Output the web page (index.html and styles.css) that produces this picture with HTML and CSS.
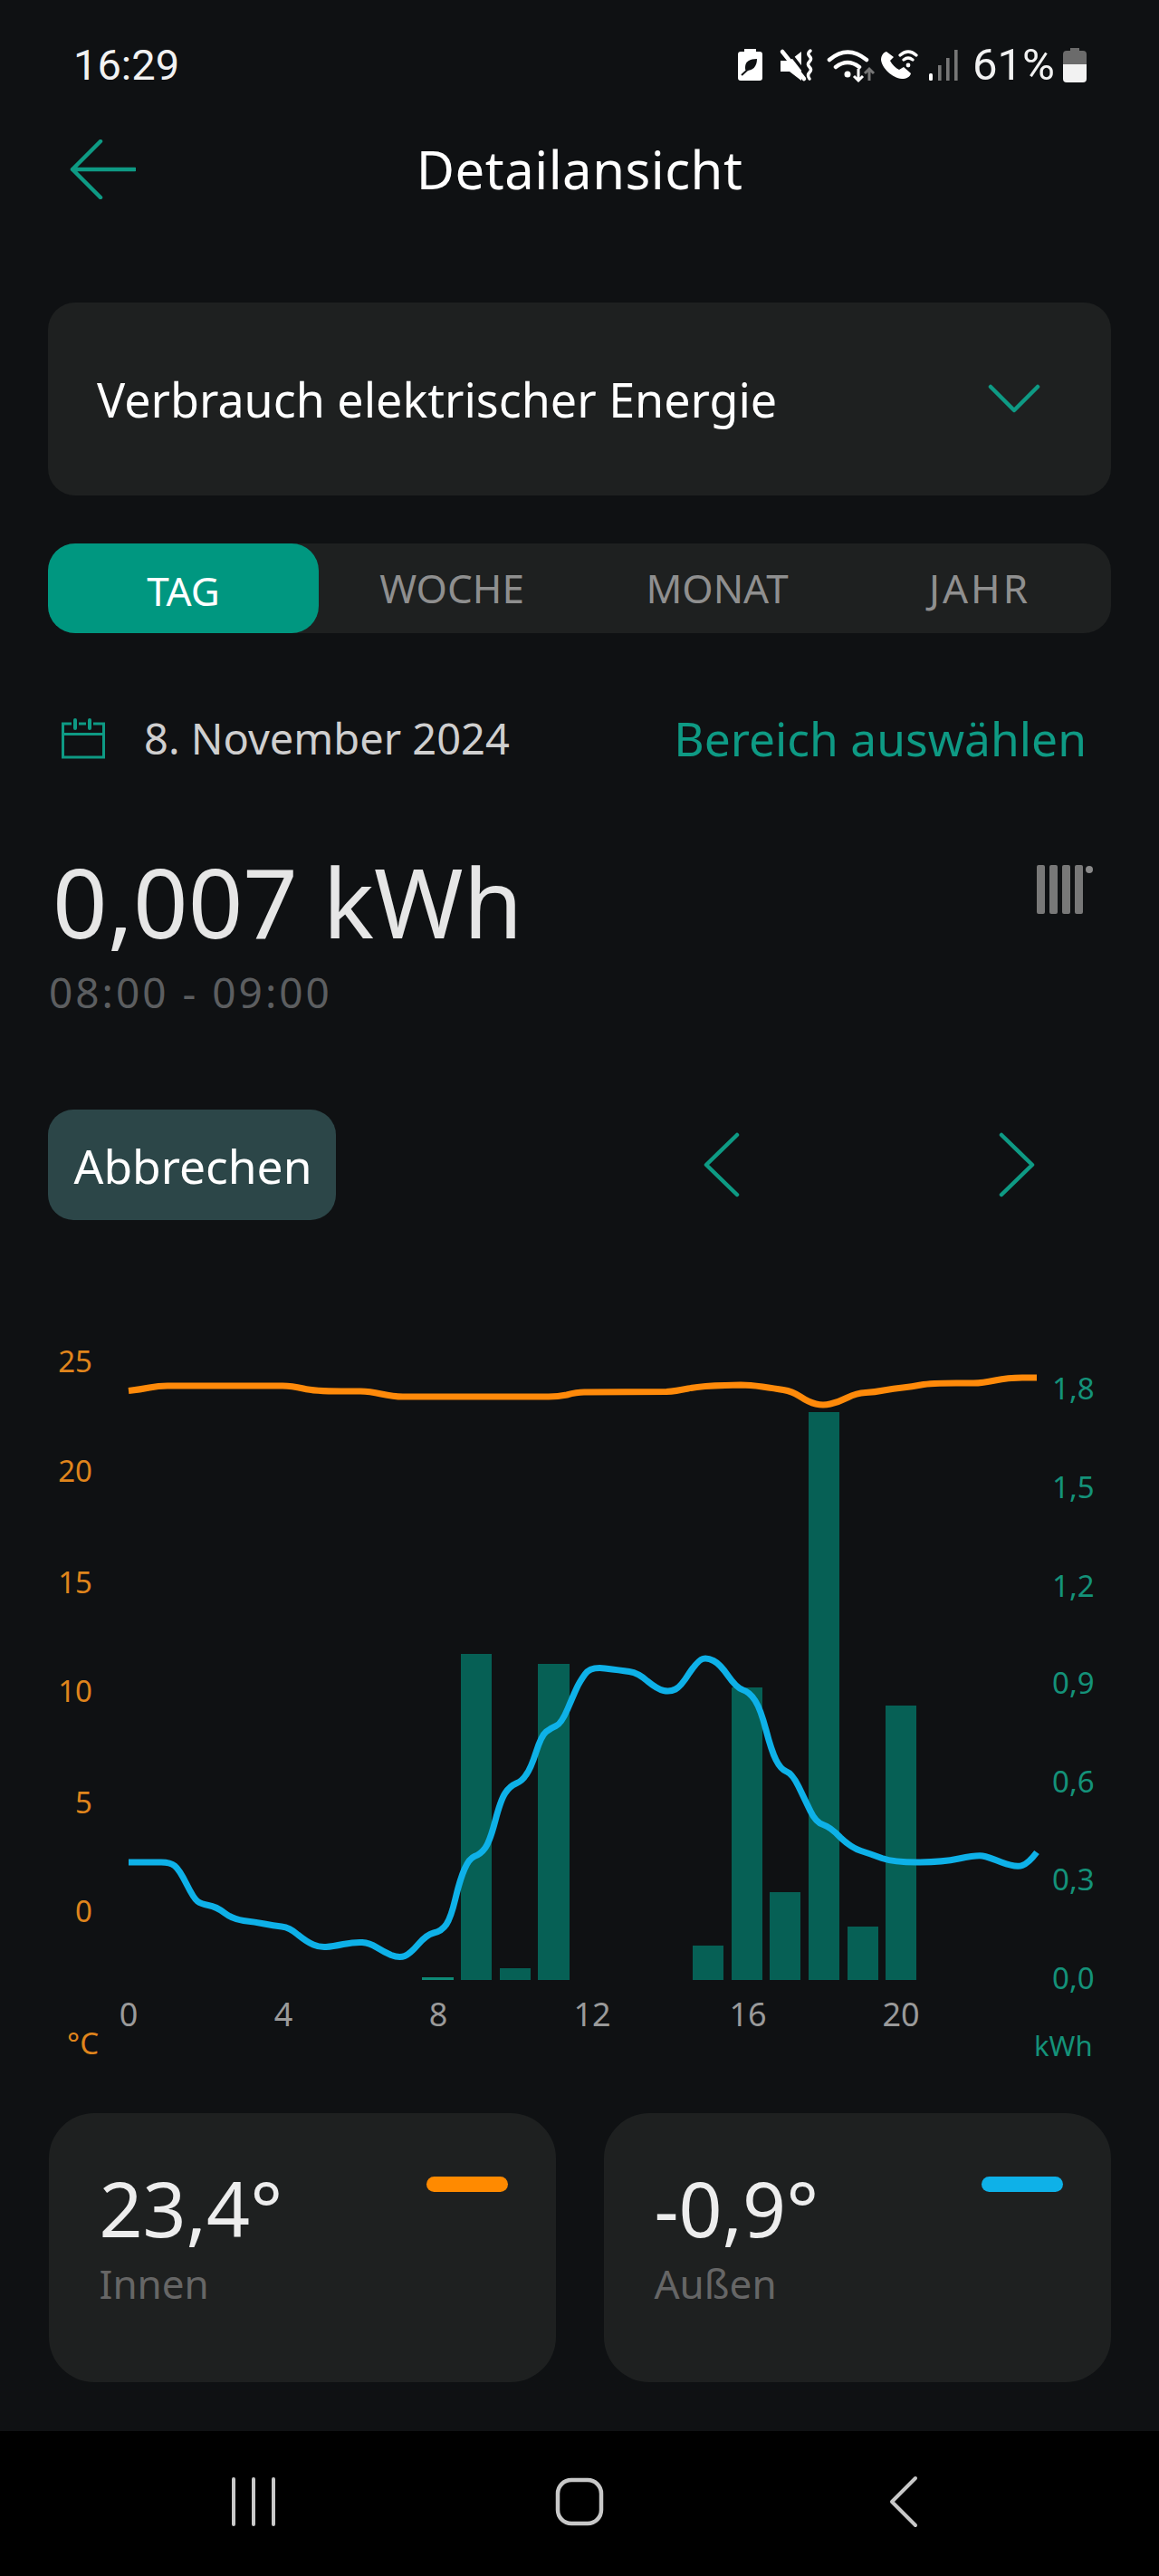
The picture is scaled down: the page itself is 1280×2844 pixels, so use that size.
FILE: index.html
```html
<!DOCTYPE html>
<html lang="de">
<head>
<meta charset="utf-8">
<title>Detailansicht</title>
<link rel="stylesheet" href="styles.css">
</head>
<body>
<div class="page">
  <div class="status">
    <span class="time">16:29</span>
    <div class="status-right">
      <svg class="status-icons" width="250" height="40" viewBox="812 53 250 40">
        <path fill="#fff" d="M822 55h13v3h4a3 3 0 0 1 3 3v26a3 3 0 0 1-3 3h-21a3 3 0 0 1-3-3V61a3 3 0 0 1 3-3h4z"/>
        <path fill="#0f1113" d="M836 66c-8 0-13 3-13 9 0 2 0 3 1 4 7 0 12-4 12-13z"/>
        <path stroke="#0f1113" stroke-width="2" d="M819 84l11-10" fill="none"/>
        <path fill="#fff" d="M862 68h10l13-10v32l-13-10h-10z"/>
        <path stroke="#0f1113" stroke-width="3.5" d="M868 54l24 31"/>
        <path stroke="#fff" stroke-width="4.5" stroke-linecap="round" d="M864 58l24 30"/>
        <path stroke="#fff" stroke-width="3.5" fill="none" stroke-linecap="round" d="M895 57q-4 3-1 6t0 6q-3 3 0 6t0 6q-3 3 0 7"/>
        <path stroke="#fff" stroke-width="4.500" fill="none" stroke-linecap="round" d="M916 67q20-17 41 0M923 75q13-10 26 0"/>
        <circle cx="936" cy="83" r="3.5" fill="#fff"/>
        <path stroke="#fff" stroke-width="3" fill="none" d="M948 77v13M943 85l5 5 5-5"/>
        <path stroke="#777" stroke-width="3" fill="none" d="M960 90V78M955 82l5-5 5 5"/>
        <path fill="#fff" d="M979 58c-4 1-6 5-6 9 1 9 12 20 23 21 5 0 9-2 10-6l-8-7-5 3c-4-2-8-6-10-10l4-4z"/>
        <path stroke="#fff" stroke-width="3.2" fill="none" stroke-linecap="round" d="M994 62q9-8 18 0M998 67q5-4 10 0"/>
        <circle cx="1003" cy="73" r="2.4" fill="#fff"/>
        <rect x="1026" y="82" width="4" height="8" rx="1.5" fill="#fff"/>
        <rect x="1036" y="73" width="3.6" height="17" fill="#777"/>
        <rect x="1045" y="65" width="3.6" height="25" fill="#777"/>
        <rect x="1054" y="56" width="3.6" height="34" fill="#777"/>
      </svg>
      <span class="percent">61%</span>
      <svg class="status-battery" width="26" height="38" viewBox="0 0 26 38">
        <path fill="#6b6b6b" d="M8 0h10v3h4a4 4 0 0 1 4 4v11H0V7a4 4 0 0 1 4-4h4z"/>
        <path fill="#f2f2f2" d="M0 18h26v16a4 4 0 0 1-4 4H4a4 4 0 0 1-4-4z"/>
      </svg>
    </div>
  </div>

  <header class="header">
    <svg class="back" width="74" height="66" viewBox="0 0 74 66">
      <path d="M35 2L4 33l31 31M4 33h69" fill="none" stroke="#0e9a84" stroke-width="4.5" stroke-linecap="round" stroke-linejoin="round"/>
    </svg>
    <h1 class="title">Detailansicht</h1>
  </header>

  <div class="select">
    <span>Verbrauch elektrischer Energie</span>
    <svg width="58" height="34" viewBox="0 0 58 34"><path d="M3 4l26 26L55 4" fill="none" stroke="#0e9a84" stroke-width="4.5" stroke-linecap="round" stroke-linejoin="round"/></svg>
  </div>

  <nav class="tabs">
    <span class="tab active">TAG</span>
    <span class="tab tab-week">WOCHE</span>
    <span class="tab tab-month">MONAT</span>
    <span class="tab tab-year">JAHR</span>
  </nav>

  <div class="date-row">
    <div class="date">
      <svg width="48" height="46" viewBox="0 0 48 46">
        <path d="M11 7H1.5v37h45V7H35M1.5 18.500h45M19 7h8" fill="none" stroke="#0e9a84" stroke-width="3"/>
        <path d="M15 3v9M31 3v9" fill="none" stroke="#0e9a84" stroke-width="4" stroke-linecap="round"/>
      </svg>
      <span>8. November 2024</span>
    </div>
    <span class="range">Bereich auswählen</span>
  </div>

  <div class="value-row">
    <div>
      <div class="value">0,007 kWh</div>
      <div class="hours">08:00 - 09:00</div>
    </div>
    <svg class="meter" width="66" height="56" viewBox="0 0 66 56">
      <g fill="#787878">
        <rect x="1" y="1" width="9" height="54" rx="2"/>
        <rect x="15" y="1" width="9" height="54" rx="2"/>
        <rect x="29" y="1" width="9" height="54" rx="2"/>
        <rect x="43" y="1" width="9" height="54" rx="2"/>
      </g>
      <circle cx="59" cy="6" r="4" fill="#8a8a8a"/>
    </svg>
  </div>

  <div class="action-row">
    <button class="cancel">Abbrechen</button>
    <svg class="prev" width="40" height="72" viewBox="0 0 40 72"><path d="M37 3L3 36l34 33" fill="none" stroke="#0e9a84" stroke-width="4.5" stroke-linecap="round" stroke-linejoin="round"/></svg>
    <svg class="next" width="40" height="72" viewBox="0 0 40 72"><path d="M3 3l34 33L3 69" fill="none" stroke="#0e9a84" stroke-width="4.5" stroke-linecap="round" stroke-linejoin="round"/></svg>
  </div>

  <svg class="chart" width="1280" height="810" viewBox="0 1480 1280 810">
    <g class="bars">
      <rect class="bar-thin" x="466" y="2183" width="35" height="3"/>
      <rect x="509" y="1826" width="34" height="360"/>
      <rect x="552" y="2173" width="34" height="13"/>
      <rect x="594" y="1837" width="35" height="349"/>
      <rect x="765" y="2148" width="34" height="38"/>
      <rect x="808" y="1863" width="34" height="323"/>
      <rect x="850" y="2089" width="34" height="97"/>
      <rect x="893" y="1559" width="34" height="627"/>
      <rect x="936" y="2127" width="34" height="59"/>
      <rect x="978" y="1883" width="34" height="303"/>
    </g>
    <path class="line line-in" d="M142 1535.5 Q155 1534 165 1532 Q175 1530 185 1530 L312 1530 Q322 1530 335 1533 Q347 1536 377 1536 L398 1536 Q408 1536 421 1539 Q435 1542 445 1542 L606 1542 Q616 1542 626 1540 Q637 1537 645 1537 L736 1536.5 Q746 1536 760 1533 Q775 1530 801 1529.5 L818 1529 Q828 1529 842 1531 Q856 1533 865 1534.5 Q875 1536 884 1542 Q893 1548 901 1550 Q909 1552 917 1550 Q926 1548 936 1543 Q946 1538 956 1537.5 Q966 1537 976 1535 Q987 1533 997 1532 Q1007 1531 1017 1529 Q1028 1527 1056 1527 L1075 1527 Q1085 1527 1099 1524 Q1113 1521 1129 1521 L1145 1521"/>
    <path class="line line-out" d="M142 2056 L178 2056 Q188 2056 193 2060 Q198 2064 206 2080 Q214 2096 218 2099 Q222 2102 230 2103.5 Q239 2105 248 2112 Q257 2119 269 2120.5 Q282 2122 292 2124 Q302 2126 311 2127 Q320 2128 329 2136 Q339 2144 346 2147 Q353 2150 360 2149.5 Q367 2149 379 2146.5 Q392 2144 400 2144.5 Q408 2145 416 2150 Q424 2155 432 2158.5 Q441 2162 447 2159.5 Q453 2157 462 2146.5 Q471 2136 479 2134 Q488 2132 493 2124.5 Q498 2117 503 2096 Q508 2075 513 2063.5 Q518 2052 524 2049.5 Q531 2047 536 2040 Q541 2033 547 2010 Q553 1987 558 1979.5 Q563 1972 570 1969 Q577 1966 581 1959.5 Q586 1953 592 1934.5 Q598 1916 603 1912 Q608 1908 614 1905.5 Q620 1903 627 1886.5 Q634 1870 637 1863.5 Q640 1857 646 1848.5 Q652 1840 668 1842 Q685 1844 695 1845.5 Q705 1847 715 1856 Q726 1865 733 1866.5 Q740 1868 746 1865 Q752 1862 761 1847.5 Q771 1833 776 1831.5 Q781 1830 788 1833.5 Q795 1837 804 1850 Q813 1863 820 1865.5 Q828 1868 834 1877.5 Q840 1887 846 1910 Q852 1933 857 1943 Q862 1953 868 1955.5 Q875 1958 882 1972.5 Q889 1987 895 1999.5 Q901 2012 909 2014.5 Q917 2017 928 2028.5 Q940 2040 951 2043.5 Q962 2047 974 2051.5 Q987 2056 1013 2056 Q1040 2056 1059 2052 Q1079 2048 1085 2049 Q1091 2050 1106 2056 Q1122 2062 1129 2059.5 Q1136 2057 1145 2045"/>
    <g class="axis-left">
      <text x="102" y="1514.500">25</text>
      <text x="102" y="1636">20</text>
      <text x="102" y="1759">15</text>
      <text x="102" y="1879">10</text>
      <text x="102" y="2002">5</text>
      <text x="102" y="2122">0</text>
      <text x="109" y="2268">°C</text>
    </g>
    <g class="axis-x">
      <text x="142" y="2237">0</text>
      <text x="313" y="2237">4</text>
      <text x="484" y="2237">8</text>
      <text x="654" y="2237">12</text>
      <text x="826" y="2237">16</text>
      <text x="995" y="2237">20</text>
    </g>
    <g class="axis-right">
      <text x="1162" y="1545">1,8</text>
      <text x="1162" y="1654">1,5</text>
      <text x="1162" y="1763">1,2</text>
      <text x="1162" y="1870">0,9</text>
      <text x="1162" y="1979">0,6</text>
      <text x="1162" y="2087">0,3</text>
      <text x="1162" y="2196">0,0</text>
      <text class="axis-unit" x="1142" y="2270">kWh</text>
    </g>
  </svg>

  <div class="cards">
    <div class="card">
      <div>
        <div class="temp">23,4°</div>
        <div class="label">Innen</div>
      </div>
      <span class="dash dash-in"></span>
    </div>
    <div class="card">
      <div>
        <div class="temp">-0,9°</div>
        <div class="label">Außen</div>
      </div>
      <span class="dash dash-out"></span>
    </div>
  </div>

  <footer class="nav">
    <svg class="nav-menu" width="50" height="54" viewBox="0 0 50 54"><path d="M3 2v50M25 2v50M47 2v50" stroke="#c8c8c8" stroke-width="4" stroke-linecap="round"/></svg>
    <svg class="nav-home" width="56" height="56" viewBox="0 0 56 56"><rect x="4" y="4" width="48" height="48" rx="15" fill="none" stroke="#c8c8c8" stroke-width="4.5"/></svg>
    <svg class="nav-back" width="32" height="58" viewBox="0 0 32 58"><path d="M29 3L3 29l26 26" fill="none" stroke="#c8c8c8" stroke-width="4" stroke-linecap="round" stroke-linejoin="round"/></svg>
  </footer>
</div>
</body>
</html>
```
FILE: styles.css
```css
* { box-sizing: border-box; }
html, body { margin: 0; padding: 0; background: #0f1113; }
.page {
  width: 1280px;
  height: 2844px;
  overflow: hidden;
  display: flex;
  flex-direction: column;
  background: #0f1113;
  color: #fff;
  font-family: "Noto Sans", "Open Sans", sans-serif;
}
.status {
  height: 144px;
  padding: 0 80px 0 81px;
  display: flex;
  align-items: center;
  justify-content: space-between;
  font-family: Roboto, sans-serif;
  font-size: 47px;
  color: #f2f2f2;
}
.status-right { display: flex; align-items: center; }
.percent { margin-left: 12px; margin-right: 9px; font-size: 49px; }
.header {
  height: 86px;
  padding-left: 76px;
  display: flex;
  align-items: center;
  position: relative;
}
.title {
  position: absolute;
  left: 0;
  right: 0;
  margin: 0;
  text-align: center;
  font-size: 58px;
  font-weight: 400;
  letter-spacing: 0.5px;
  line-height: 86px;
}
.select {
  margin: 104px 53px 0 53px;
  height: 214px;
  background: #1e2020;
  border-radius: 30px;
  padding: 0 78px 0 54px;
  display: flex;
  align-items: center;
  justify-content: space-between;
  font-size: 52px;
}
.tabs {
  margin: 53px 53px 0;
  height: 99px;
  background: #1e2020;
  border-radius: 30px;
  display: flex;
  align-items: center;
  font-size: 44px;
  color: #8f8f8f;
}
.tab { display: flex; align-items: center; justify-content: center; height: 100%; padding-bottom: 2px; }
.tab.active {
  width: 299px;
  background: #009780;
  color: #fff;
  border-radius: 30px;
  padding: 4px 0 0;
}
.tab-week { width: 294px; }
.tab-month { width: 292px; }
.tab-year { width: 288px; letter-spacing: 3px; }
.date-row {
  margin: 91px 80px 0 68px;
  height: 50px;
  display: flex;
  align-items: center;
  justify-content: space-between;
}
.date { display: flex; align-items: center; gap: 43px; font-size: 47px; color: #cfcfcf; }
.range { font-size: 51.5px; color: #0e9a84; }
.value-row {
  margin: 100px 70px 0 58px;
  display: flex;
  justify-content: space-between;
  align-items: flex-start;
}
.value { font-size: 106px; line-height: 110px; color: #e6e6e6; }
.hours { margin: 16px 0 0 -4px; font-size: 46px; letter-spacing: 3px; line-height: 58px; color: #5c5e60; }
.meter { margin-top: 14px; }
.action-row {
  margin: 101px 0 0 53px;
  height: 122px;
  display: flex;
  align-items: center;
}
.cancel {
  width: 318px;
  height: 122px;
  padding: 2px 0 0 2px;
  border: 0;
  border-radius: 28px;
  background: #2c4648;
  color: #fff;
  font-family: inherit;
  font-size: 51.5px;
}
.prev { margin-left: 406px; }
.next { margin-left: 286px; }
.chart { display: block; margin-top: 133px; flex: none; }
.bars { fill: #066055; }
.bar-thin { fill: #0e8a76; }
.line { fill: none; stroke-width: 7; stroke-linejoin: round; }
.line-in { stroke: #ff8a0a; }
.line-out { stroke: #0eb1e8; }
.axis-left { fill: #e0851c; font-size: 33px; text-anchor: end; }
.axis-x { fill: #9a9a9a; font-size: 36px; text-anchor: middle; }
.axis-right { fill: #149279; font-size: 33px; }
.axis-unit { font-size: 31px; }
.cards {
  margin: 43px 53.5px 0;
  display: flex;
  justify-content: space-between;
}
.card {
  width: 560px;
  height: 297px;
  background: #1e2020;
  border-radius: 50px;
  padding: 57px 53px 0 56px;
  display: flex;
  justify-content: space-between;
  align-items: flex-start;
}
.temp { font-size: 84px; line-height: 96px; color: #ededed; }
.label { margin-top: 6px; font-size: 44px; line-height: 58px; color: #666; }
.dash { width: 90px; height: 17px; margin-top: 13px; border-radius: 9px; }
.dash-in { background: #ff8a00; }
.dash-out { background: #0eb1e8; }
.nav {
  margin-top: 54px;
  height: 160px;
  background: #000;
  flex: none;
  display: flex;
  align-items: center;
  padding: 0 0 4px 255px;
}
.nav-home { margin-left: 307px; }
.nav-back { margin-left: 314px; }
```
